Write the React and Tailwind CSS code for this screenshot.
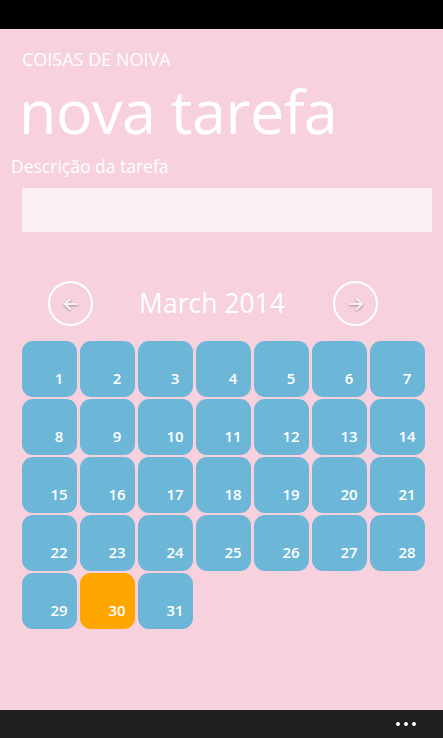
import React from 'react';

const days = Array.from({ length: 31 }, (_, i) => i + 1);

const ArrowButton = ({ dir }) => (
  <button className="w-[45px] h-[45px] rounded-full border-2 border-white flex items-center justify-center">
    <svg width="16" height="14" viewBox="0 0 16 14" fill="none" stroke="#f4f4f4" strokeWidth="2" strokeLinecap="round" strokeLinejoin="round" style={{ filter: 'drop-shadow(0 1px 1px rgba(0,0,0,0.35))' }}>
      {dir === 'left' ? (
        <>
          <path d="M14 7H2" />
          <path d="M7 2L2 7l5 5" />
        </>
      ) : (
        <>
          <path d="M2 7h12" />
          <path d="M9 2l5 5-5 5" />
        </>
      )}
    </svg>
  </button>
);

const App = () => {
  return (
    <div className="w-[443px] h-[738px] flex flex-col overflow-hidden" style={{ fontFamily: '"Open Sans", "Noto Sans", sans-serif' }}>
      {/* barra de status */}
      <div className="h-[29px] bg-black shrink-0" />

      <div className="flex-1 bg-[#f7d1de] flex flex-col">
        <div className="pl-[22px] pt-[18px] text-[18px] leading-[24px] text-white">COISAS DE NOIVA</div>
        <div className="pl-[19px] mt-[7px] text-[61px] leading-[66px] text-white tracking-[-0.5px] whitespace-nowrap">nova tarefa</div>
        <div className="pl-[11px] mt-[10px] text-[17.5px] leading-[24px] text-white">Descrição da tarefa</div>
        <div className="ml-[22px] mt-[10px] w-[410px] h-[44px] bg-[#fdf0f4]" />

        {/* calendario */}
        <div className="mt-[49px] flex items-center">
          <div className="w-[139px] flex justify-center pl-[2px]">
            <ArrowButton dir="left" />
          </div>
          <div className="w-[146px] text-[26.5px] leading-[40px] text-white text-center whitespace-nowrap pb-[1px]">March 2014</div>
          <div className="flex-1 flex pl-[48px]">
            <ArrowButton dir="right" />
          </div>
        </div>

        <div className="ml-[22px] mt-[15px] grid grid-cols-[repeat(7,55px)] auto-rows-[56px] gap-x-[3px] gap-y-[2px]">
          {days.map((d) => (
            <div
              key={d}
              className={`rounded-[11px] flex items-end justify-center pl-[19px] pb-[10px] text-[15px] leading-[18px] font-semibold text-white ${d === 30 ? 'bg-[#ffa500]' : 'bg-[#6cb6d7]'}`}
            >
              {d}
            </div>
          ))}
        </div>
      </div>

      {/* app bar */}
      <div className="h-[28px] bg-[#1f1f1f] shrink-0 flex items-center justify-end pr-[27px] gap-[4px]">
        <span className="w-[4px] h-[4px] rounded-full bg-white" />
        <span className="w-[4px] h-[4px] rounded-full bg-white" />
        <span className="w-[4px] h-[4px] rounded-full bg-white" />
      </div>
    </div>
  );
};

export default App;
